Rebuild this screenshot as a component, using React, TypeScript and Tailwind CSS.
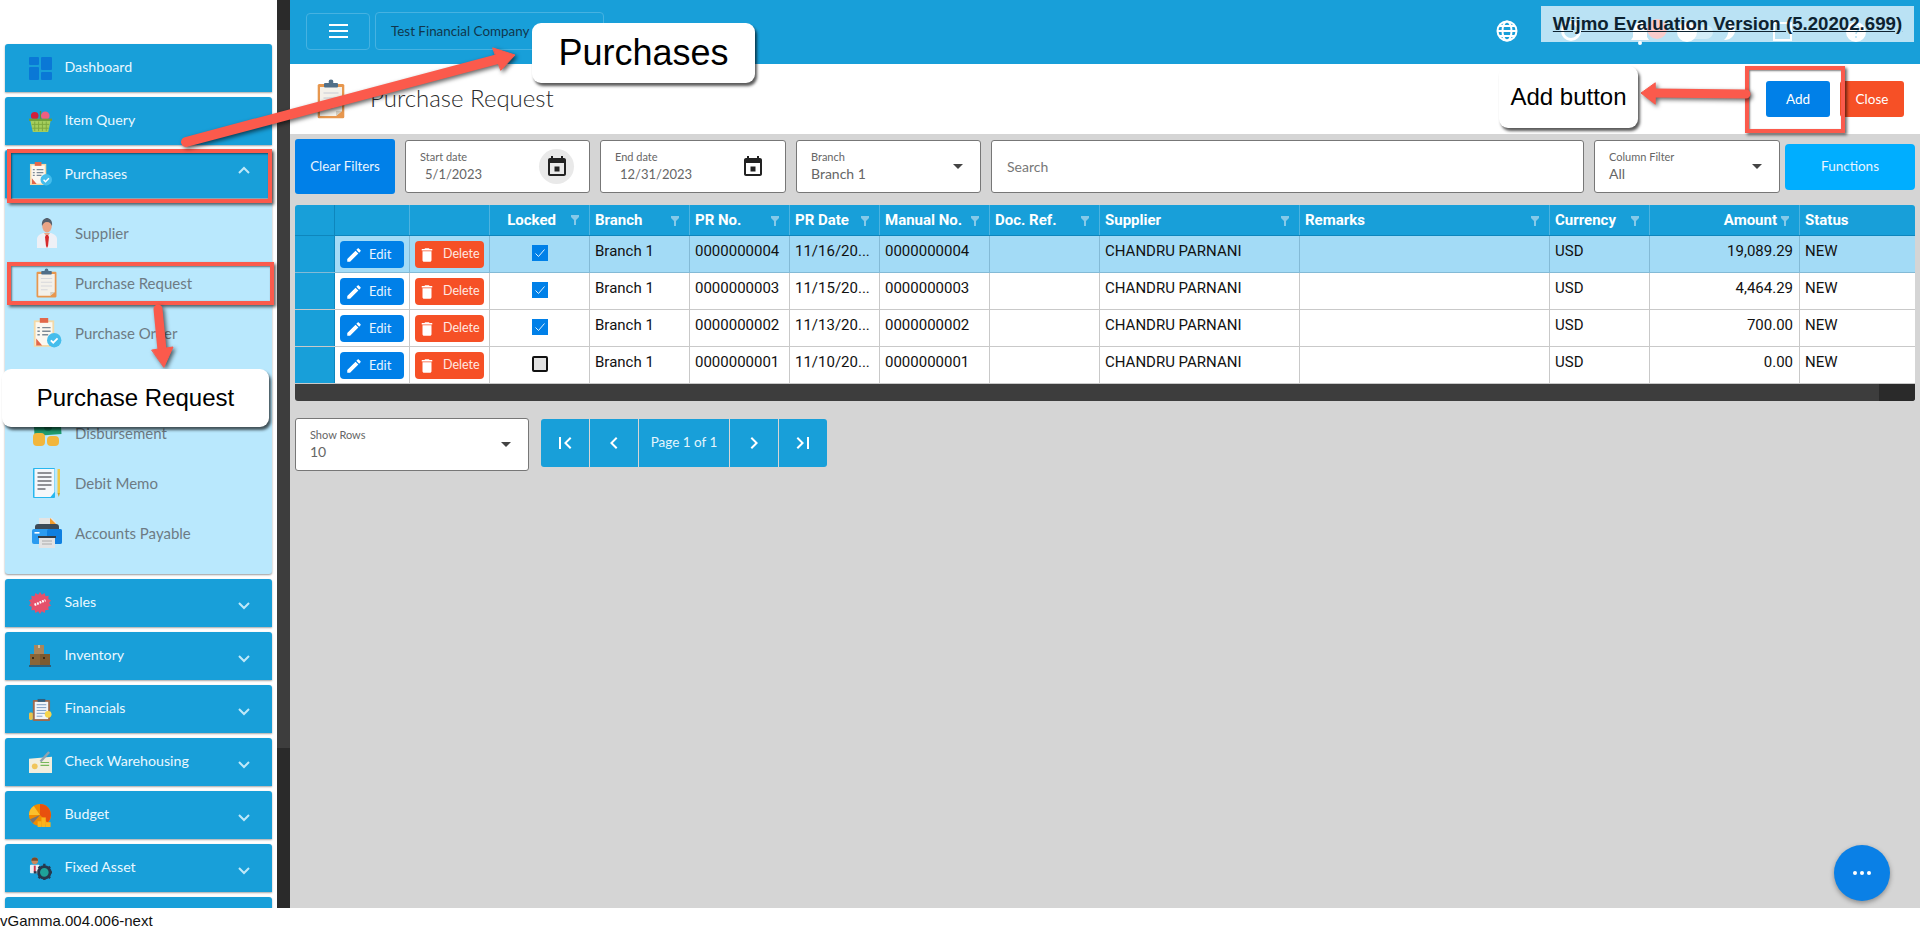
import type { ReactNode } from "react"

const BLUE = "#189fd9"

/* ---------- small material style glyphs ---------- */
function Mi({ d, className }: { d: string; className?: string }) {
  return (
    <svg viewBox="0 0 24 24" className={className} fill="currentColor">
      <path d={d} />
    </svg>
  )
}

const pen = "M3 17.25V21h3.75L17.81 9.94l-3.75-3.75L3 17.25zM20.71 7.04c.39-.39.39-1.02 0-1.41l-2.34-2.34c-.39-.39-1.02-.39-1.41 0l-1.83 1.83 3.75 3.75 1.83-1.83z"
const trash = "M6 19c0 1.1.9 2 2 2h8c1.1 0 2-.9 2-2V7H6v12zM19 4h-3.5l-1-1h-5l-1 1H5v2h14V4z"
const calendar = "M14.5 11.5h-5v5h5v-5zM16 1v2H8V1H6v2H5c-1.11 0-1.99.9-1.99 2L3 19c0 1.1.89 2 2 2h14c1.1 0 2-.9 2-2V5c0-1.1-.9-2-2-2h-1V1h-2zm3 18H5V8h14v11z"
const first = "M18.41 16.59L13.82 12l4.59-4.59L17 6l-6 6 6 6zM6 6h2v12H6z"
const prev = "M15.41 7.41L14 6l-6 6 6 6 1.41-1.41L10.83 12z"
const next = "M10 6L8.59 7.41 13.17 12l-4.58 4.59L10 18l6-6z"
const last = "M5.59 7.41L10.18 12l-4.59 4.59L7 18l6-6-6-6zM16 6h2v12h-2z"

function Chevron({ up }: { up?: boolean }) {
  return (
    <svg viewBox="0 0 12 8" className="h-[8px] w-[12px]" fill="none" stroke="#bfe8f8" strokeWidth="2">
      <path d={up ? "M1 7l5-5 5 5" : "M1 1l5 5 5-5"} />
    </svg>
  )
}

function Funnel() {
  return (
    <svg viewBox="0 0 8 10" className="h-[10px] w-[8px]" fill="#86c9e8">
      <path d="M0 0h8v2L5 5v5H3V5L0 2z" />
    </svg>
  )
}

function Caret() {
  return <span className="h-0 w-0 border-x-[5px] border-t-[5px] border-x-transparent border-t-[#444]" />
}

/* ---------- coloured menu pictures ---------- */
const DashboardPic = (
  <svg viewBox="0 0 23 23" className="h-[23px] w-[23px]" fill="#0a78d6">
    <rect width="10" height="8" rx="1" />
    <rect y="10" width="10" height="13" rx="1" />
    <rect x="12" width="11" height="13" rx="1" />
    <rect x="12" y="15" width="11" height="8" rx="1" />
  </svg>
)

const BasketPic = (
  <svg viewBox="0 0 24 24" className="h-[23px] w-[23px]">
    <path d="M12 1v9" stroke="#5b8f3a" strokeWidth="1.5" />
    <circle cx="6" cy="6" r="4" fill="#d0203a" />
    <circle cx="17" cy="6" r="4.5" fill="#ef5f80" />
    <rect y="9" width="24" height="2.5" fill="#6e9e3c" />
    <path d="M1.5 11.5h21L20 23H4z" fill="#a4cd5c" />
    <path d="M6 12v10M10 12v10M14 12v10M18 12v10M3 15h18M3.5 19h17" stroke="#7da83f" strokeWidth="1" />
  </svg>
)

function PurchaseDocPic({ size }: { size: string }) {
  return (
    <svg viewBox="0 0 24 25" className={size}>
      <rect x="1" y="2" width="17" height="22" fill="#f3d9a8" />
      <rect x="2.5" y="3.5" width="14" height="19" fill="#fbf8f1" />
      <rect x="6" y="0" width="7" height="4" fill="#e2674a" />
      <path d="M8 8h7M8 11h7M8 14h5M4 8h2M4 11h2M4 14h2" stroke="#7d8a96" strokeWidth="1.2" />
      <path d="M3 17l5 6H3z" fill="#e2674a" />
      <circle cx="18" cy="18.5" r="6" fill="#45bdec" />
      <path d="M15.2 18.6l2 2 3.6-3.6" stroke="#fff" strokeWidth="1.5" fill="none" />
    </svg>
  )
}

function ClipboardPic({ className }: { className: string }) {
  return (
    <svg viewBox="0 0 28 40" className={className}>
      <rect x="0.7" y="5" width="26.6" height="34.3" rx="1.5" fill="#e7974e" />
      <path d="M3 8h22v24l-6 5H3z" fill="#f4f1ea" />
      <path d="M19 37l6-5h-6z" fill="#d5cfc2" />
      <path d="M6.5 14h15M6.5 19h15M6.5 24h15M6.5 29h9" stroke="#d6d8db" strokeWidth="1.5" />
      <rect x="7" y="4" width="14" height="4.5" rx="1" fill="#506f88" />
      <circle cx="14" cy="3" r="2.4" fill="#506f88" />
    </svg>
  )
}

const PersonPic = (
  <svg viewBox="0 0 20 30" className="h-[30px] w-[20px]">
    <path d="M0 30v-9c0-3 3-5 6-6h8c3 1 6 3 6 6v9z" fill="#eef0f6" />
    <path d="M7 15h6l-3 4z" fill="#e9a586" />
    <path d="M9 17h2l1 2-1 9-1 2-1-2-1-9z" fill="#d62a2d" />
    <ellipse cx="10" cy="8" rx="4.8" ry="6.5" fill="#e9a586" />
    <path d="M5 8C4 2 8 0 10 0s6 2 5 8c-1-2-2-4-5-4S6 6 5 8z" fill="#55606d" />
  </svg>
)

const MoneyPic = (
  <svg viewBox="0 0 30 28" className="h-[30px] w-[30px]">
    <rect x="2" y="0" width="27" height="16" fill="#1f9b6e" transform="rotate(-4 15 8)" />
    <circle cx="16" cy="8" r="4" fill="#147a55" />
    <rect x="1" y="14" width="12" height="13" rx="4" fill="#f2b63c" />
    <rect x="15" y="17" width="12" height="10" rx="4" fill="#f2b63c" />
  </svg>
)

const MemoPic = (
  <svg viewBox="0 0 28 30" className="h-[30px] w-[28px]">
    <rect x="0" y="0" width="22" height="30" rx="1" fill="#26b7ef" />
    <path d="M1.5 1h20v23l-4 5h-16z" fill="#f5f7fa" />
    <path d="M4.5 5h14M4.5 9h14M4.5 13h14M4.5 17h14M4.5 21h8" stroke="#6d6f74" strokeWidth="1.6" />
    <rect x="24.5" y="1" width="2.5" height="24" fill="#f0c947" />
    <path d="M24.5 25h2.5l-1.2 4z" fill="#caa02e" />
  </svg>
)

const PrinterPic = (
  <svg viewBox="0 0 30 30" className="h-[30px] w-[30px]">
    <path d="M7 0h13l4 4v10H7z" fill="#e4e4e4" />
    <path d="M18 0l6 6h-6z" fill="#f39c2c" />
    <rect x="3" y="6" width="24" height="8" rx="3" fill="#3d4a57" />
    <rect x="0" y="11" width="30" height="15" rx="2" fill="#2b9bf0" />
    <rect x="15" y="11" width="15" height="15" rx="2" fill="#0f7fe0" />
    <rect x="2.5" y="14" width="5" height="1.6" fill="#fff" />
    <rect x="6" y="18" width="18" height="2" fill="#333b44" />
    <rect x="7" y="20" width="16" height="10" fill="#e3e3e3" />
    <path d="M10 23h10M10 26h10" stroke="#aaa" strokeWidth="1" />
  </svg>
)

const SalePic = (
  <svg viewBox="0 0 24 24" className="h-[22px] w-[22px]">
    <path
      d="M12 0l2 3 3-2 1 3.500 3.500-.5-.5 3.500L24 9l-2 3 2 3-3 1 .5 3.500L18 19.500 17 23l-3-2-2 3-2-3-3 2-1-3.500-3.500.5L3 16l-3-1 2-3-2-3 3-1.500L2.500 4 6 4.500 7 1l3 2z"
      fill="#e5506b"
    />
    <path d="M6 14l12-5" stroke="#fff" strokeWidth="2.600" strokeDasharray="2 1" />
  </svg>
)

const BoxesPic = (
  <svg viewBox="0 0 22 22" className="h-[22px] w-[22px]">
    <rect x="5" y="0" width="10" height="10" fill="#a9865c" />
    <rect x="1" y="9" width="10" height="11" fill="#8a6537" />
    <rect x="11" y="9" width="10" height="11" fill="#7b5a30" />
    <rect x="9" y="0" width="2" height="3" fill="#d6bd96" />
    <rect x="3" y="12" width="2" height="2" fill="#3f2d18" />
    <rect x="14" y="12" width="2" height="2" fill="#3f2d18" />
    <rect x="0" y="20" width="22" height="2" fill="#2d5f78" />
  </svg>
)

const FinancialsPic = (
  <svg viewBox="0 0 24 24" className="h-[23px] w-[23px]">
    <rect x="4" y="2" width="18" height="22" rx="1" fill="#9c6a4f" />
    <rect x="6" y="4" width="14" height="18" fill="#f1f5fa" />
    <path d="M8 7h10M8 10h10M8 13h10M8 16h10M8 19h6" stroke="#7b9cc2" strokeWidth="1" />
    <rect x="9" y="1" width="8" height="3" fill="#2f5f80" />
    <rect x="0" y="15" width="4" height="8" rx="1.500" fill="#e8c24a" />
    <circle cx="20" cy="17" r="3.500" fill="#f6d54c" />
  </svg>
)

const CheckPic = (
  <svg viewBox="0 0 24 24" className="h-[23px] w-[23px]">
    <path d="M0 8l24-2v17H0z" fill="#f1eedd" />
    <path d="M12 11L21 1" stroke="#94a3ad" strokeWidth="2.500" />
    <path d="M12 12h9M12 15h9" stroke="#77b85a" strokeWidth="1.200" />
    <circle cx="6" cy="16" r="3" fill="#f0c55a" />
  </svg>
)

const BudgetPic = (
  <svg viewBox="0 0 24 24" className="h-[23px] w-[23px]">
    <circle cx="11.500" cy="11.500" r="11.500" fill="#f08a00" />
    <path d="M11.500 0a11.500 11.500 0 0 1 8 19.500L11.500 11.500z" fill="#e8500e" />
    <path d="M0 11.500A11.500 11.500 0 0 1 5 2l6.500 9.500z" fill="#fbc02d" />
    <path d="M11.500 11.500L1 16l3 4z" fill="#7b7370" />
    <rect x="9" y="18" width="4" height="6" fill="#f9b31a" />
    <rect x="13" y="14" width="4.500" height="10" fill="#f9b31a" />
    <rect x="17.500" y="19" width="5" height="5" fill="#f9b31a" />
  </svg>
)

const AssetPic = (
  <svg viewBox="0 0 24 24" className="h-[23px] w-[23px]">
    <circle cx="6" cy="4" r="3.500" fill="#c98a5e" />
    <path d="M2.500 4a3.500 3.500 0 0 1 7 0z" fill="#7a4b2a" />
    <rect x="1" y="8" width="10" height="9" rx="1" fill="#e9edf3" />
    <rect x="5" y="9" width="2" height="7" fill="#d0364a" />
    <circle cx="16" cy="16" r="6" fill="#1ea39a" stroke="#26394d" strokeWidth="3" />
    <path d="M16 7v3M16 22v2M8 16H5M24 16h-2M10 10l2 2M22 22l-2-2M22 10l-2 2M10 22l2-2" stroke="#26394d" strokeWidth="2.500" />
  </svg>
)

/* ---------- data ---------- */
const subItems: { label: string; pic: ReactNode }[] = [
  { label: "Supplier", pic: PersonPic },
  { label: "Purchase Request", pic: <ClipboardPic className="h-[30px] w-[21px]" /> },
  { label: "Purchase Order", pic: <PurchaseDocPic size="h-[30px] w-[30px]" /> },
  { label: "", pic: null },
  { label: "Disbursement", pic: MoneyPic },
  { label: "Debit Memo", pic: MemoPic },
  { label: "Accounts Payable", pic: PrinterPic }
]

const lowerMenu: { label: string; pic: ReactNode }[] = [
  { label: "Sales", pic: SalePic },
  { label: "Inventory", pic: BoxesPic },
  { label: "Financials", pic: FinancialsPic },
  { label: "Check Warehousing", pic: CheckPic },
  { label: "Budget", pic: BudgetPic },
  { label: "Fixed Asset", pic: AssetPic }
]

const columns = "grid grid-cols-[40px_75px_80px_100px_100px_100px_90px_110px_110px_200px_250px_100px_150px_1fr]"

const headers = ["Branch", "PR No.", "PR Date", "Manual No.", "Doc. Ref.", "Supplier", "Remarks", "Currency"]

const rows = [
  { no: "0000000004", date: "11/16/20...", amount: "19,089.29", locked: true },
  { no: "0000000003", date: "11/15/20...", amount: "4,464.29", locked: true },
  { no: "0000000002", date: "11/13/20...", amount: "700.00", locked: true },
  { no: "0000000001", date: "11/10/20...", amount: "0.00", locked: false }
]

/* ---------- pieces ---------- */
function MenuRow({ label, pic, open, plain }: { label: string; pic: ReactNode; open?: boolean; plain?: boolean }) {
  return (
    <div className="flex h-[48px] shrink-0 items-center rounded-t-[3px] bg-[#189fd9] pl-[24px] pr-[22px] text-[14.200px] text-[#eaf8ff] shadow-[0_1px_2px_rgba(0,0,0,0.35)]">
      <span className="flex w-[35.500px] items-center">{pic}</span>
      <span className={`flex-1 ${open ? "" : "pb-[2px]"}`}>{label}</span>
      {!plain && (
        <span className={open ? "mb-[8px]" : "mt-[6px]"}>
          <Chevron up={open} />
        </span>
      )}
    </div>
  )
}

function Field({ label, value, width, indent, children }: { label: string; value: string; width: string; indent?: boolean; children?: ReactNode }) {
  return (
    <div className={`flex h-[53px] shrink-0 items-center justify-between rounded-[3px] border border-[#777] bg-white pl-[14px] pr-[17px] ${width}`}>
      <div className="flex flex-col">
        <span className="text-[11px] leading-[14px] text-[#666]">{label}</span>
        <span className={`pt-[1px] leading-[18px] text-[#666] ${indent ? "pl-[5px] text-[13px]" : "text-[14px]"}`}>{value}</span>
      </div>
      {children}
    </div>
  )
}

function DateField({ label, value, width, active }: { label: string; value: string; width: string; active?: boolean }) {
  return (
    <Field label={label} value={value} width={width} indent>
      <span className={`-mr-[2px] flex h-[35px] w-[35px] items-center justify-center rounded-full ${active ? "bg-[#e9e9e9]" : ""}`}>
        <Mi d={calendar} className="h-[24px] w-[24px] text-[#222]" />
      </span>
    </Field>
  )
}

function HeadCell({ label, right, last }: { label: string; right?: boolean; last?: boolean }) {
  return (
    <div className={`flex items-center justify-between gap-[4px] border-r border-[#4db3e0] pl-[5px] pr-[6px] ${last ? "border-r-0" : ""}`}>
      <span className={right ? "flex-1 text-right" : ""}>{label}</span>
      {!last && (
        <span className="mr-[4px] mt-[1px]">
          <Funnel />
        </span>
      )}
    </div>
  )
}

function Cell({ children, right, divider }: { children?: ReactNode; right?: boolean; divider: string }) {
  return <div className={`border-r pl-[5px] pr-[6px] pt-[4px] ${divider} ${right ? "text-right" : ""}`}>{children}</div>
}

function PageButton({ d }: { d: string }) {
  return (
    <span className="flex w-[48px] items-center justify-center bg-[#189fd9] text-white">
      <Mi d={d} className="h-[24px] w-[24px]" />
    </span>
  )
}

function Callout({ className, children }: { className: string; children: ReactNode }) {
  return (
    <div className={`absolute flex items-center justify-center rounded-[9px] bg-white font-['Liberation_Sans',sans-serif] text-black shadow-[2px_3px_3px_rgba(0,0,0,0.65)] ${className}`}>
      {children}
    </div>
  )
}

function TopIcons() {
  return (
    <svg viewBox="0 0 430 64" className="absolute right-0 top-0 h-[64px] w-[430px]" fill="none">
      {/* globe sits left of the watermark, the rest are veiled by it */}
      <g stroke="#fff" strokeWidth="2">
        <circle cx="17" cy="31" r="9.500" />
        <ellipse cx="17" cy="31" rx="4.500" ry="9.500" />
        <path d="M7.500 31h19M9 26h16M9 36h16" />
      </g>
      <g stroke="#fff" strokeWidth="3">
        <circle cx="81" cy="31" r="8.500" />
      </g>
      <path d="M150 22c-5 1-7 5-7 9v6l-2 3h18l-2-3v-6c0-4-2-8-7-9z" fill="#fff" />
      <circle cx="150" cy="43" r="2" fill="#fff" />
      <circle cx="167" cy="29" r="10" fill="#ef5350" />
      <rect x="197" y="25" width="26" height="14" rx="7" fill="#fff" fillOpacity="0.4" />
      <circle cx="197" cy="32" r="10" fill="#fff" />
      <path d="M237 21c6 2 8 6 8 10s-4 9-11 9c5-4 6-13 3-19z" fill="#fff" />
      <rect x="284" y="23" width="17" height="17" stroke="#fff" strokeWidth="2" />
      <circle cx="366" cy="32" r="10" fill="#fff" />
      <path d="M363 29c0-4 6-4 6 0 0 2-3 2-3 5M366 36v2" stroke={BLUE} strokeWidth="1.600" />
    </svg>
  )
}

export default function App() {
  return (
    <div className="relative flex h-[931px] w-[1920px] flex-col overflow-hidden bg-white font-['Lato',sans-serif]">
      <div className="flex h-[908px]">
        {/* side menu */}
        <aside className="flex w-[277px] flex-col gap-[5px] overflow-hidden bg-white px-[5px] pt-[44px]">
          <MenuRow label="Dashboard" pic={DashboardPic} plain />
          <MenuRow label="Item Query" pic={BasketPic} plain />
          <div className="shrink-0 rounded-b-[3px] bg-[#b9e8fd] shadow-[0_1px_2px_rgba(0,0,0,0.4)]">
            <MenuRow label="Purchases" pic={<PurchaseDocPic size="h-[24px] w-[23px]" />} open />
            <div className="pb-[16px] pt-[10px]">
              {subItems.map((s, i) => (
                <div key={i} className="flex h-[50px] items-center text-[15px] text-[#6d7b84]">
                  <span className="flex w-[70px] justify-center pl-[13px]">{s.pic}</span>
                  <span>{s.label}</span>
                </div>
              ))}
            </div>
          </div>
          {lowerMenu.map(m => (
            <MenuRow key={m.label} label={m.label} pic={m.pic} />
          ))}
          <MenuRow label="" pic={null} plain />
        </aside>

        {/* scroll bar */}
        <div className="w-[13px] shrink-0 bg-[#2a2a2a] pt-[30px]">
          <div className="h-[718px] bg-[#3d3d3d]" />
        </div>

        {/* page */}
        <main className="flex min-w-0 flex-1 flex-col bg-[#d5d5d5]">
          <header className="relative flex h-[64px] shrink-0 items-center gap-[5px] bg-[#189fd9] pl-[16px] pb-[2px]">
            <button className="flex h-[37px] w-[64px] items-center justify-center rounded-[4px] border border-[#46b2e1]">
              <span className="flex w-[19px] flex-col gap-[4px]">
                <i className="h-[2px] bg-white" />
                <i className="h-[2px] bg-white" />
                <i className="h-[2px] bg-white" />
              </span>
            </button>
            <div className="flex h-[38px] w-[229px] items-center rounded-[4px] border border-[#46b2e1] pl-[15px] text-[13.400px] text-[#10374d]">
              Test Financial Company
            </div>
            <TopIcons />
          </header>

          <div className="flex h-[70px] shrink-0 items-center justify-between bg-white pl-[27px] pr-[16px]">
            <div className="flex items-center gap-[25px]">
              <ClipboardPic className="h-[40px] w-[28px]" />
              <h1 className="pb-[2px] text-[24px] font-light text-[#2b2b2b]">Purchase Request</h1>
            </div>
            <div className="flex gap-[10px] text-[13.500px] text-white">
              <button className="h-[36px] w-[64px] rounded-[3px] bg-[#0080e8]">Add</button>
              <button className="h-[36px] w-[64px] rounded-[3px] bg-[#f65026]">Close</button>
            </div>
          </div>

          <div className="flex items-center px-[5px] pt-[5px]">
            <button className="mr-[10px] h-[55px] w-[100px] shrink-0 rounded-[3px] bg-[#0080e8] text-[13.300px] text-[#e8f4ff]">
              Clear Filters
            </button>
            <div className="flex gap-[10px]">
              <DateField label="Start date" value="5/1/2023" width="w-[185px]" active />
              <DateField label="End date" value="12/31/2023" width="w-[186px]" />
              <Field label="Branch" value="Branch 1" width="w-[185px]">
                <Caret />
              </Field>
              <div className="flex h-[53px] w-[593px] items-center rounded-[3px] border border-[#777] bg-white pl-[15px] text-[14px] text-[#777]">
                Search
              </div>
              <Field label="Column Filter" value="All" width="w-[186px]">
                <Caret />
              </Field>
            </div>
            <button className="ml-[5px] h-[46px] w-[130px] shrink-0 rounded-[4px] bg-[#00aeff] text-[13.500px] text-[#e8f4ff]">
              Functions
            </button>
          </div>

          {/* grid */}
          <div className="mx-[5px] mt-[11px] overflow-hidden rounded-[3px] font-['Roboto',sans-serif] text-[15px] text-[#111]">
            <div className={`${columns} h-[31px] border-b border-[#0e86bd] bg-[#189fd9] font-bold text-white`}>
              <div className="border-r border-[#0e86bd]" />
              <div className="border-r border-[#4db3e0]" />
              <div className="border-r border-[#4db3e0]" />
              <div className="flex items-center justify-end border-r border-[#4db3e0] pr-[10px]">
                <span className="mr-[15px]">Locked</span>
                <Funnel />
              </div>
              {headers.map(h => (
                <HeadCell key={h} label={h} />
              ))}
              <HeadCell label="Amount" right />
              <HeadCell label="Status" last />
            </div>

            {rows.map((r, i) => {
              const divider = i === 0 ? "border-[#83bad6]" : "border-[#c9c9c9]"
              return (
                <div
                  key={r.no}
                  className={`${columns} h-[37px] border-b ${divider} ${i === 0 ? "bg-[#a3dbf6]" : "bg-white"}`}
                >
                  <div className="border-r border-[#0e86bd] bg-[#189fd9]" />
                  <div className={`border-r ${divider} pl-[5px] pt-[5px]`}>
                    <button className="flex h-[27px] w-[64px] items-center rounded-[4px] bg-[#0080e8] pl-[5px] font-['Lato',sans-serif] text-[13px] text-[#e8f4ff]">
                      <Mi d={pen} className="mr-[6px] h-[18px] w-[18px] text-white" />
                      Edit
                    </button>
                  </div>
                  <div className={`border-r ${divider} pl-[5px] pt-[5px]`}>
                    <button className="flex h-[27px] w-[69px] items-center rounded-[4px] bg-[#f65026] pl-[3px] font-['Lato',sans-serif] text-[12.500px] text-[#ffe9e2]">
                      <Mi d={trash} className="mr-[7px] h-[18px] w-[18px] text-white" />
                      Delete
                    </button>
                  </div>
                  <div className={`flex justify-center border-r ${divider} pt-[9px]`}>
                    {r.locked ? (
                      <span className="flex h-[16px] w-[16px] items-center justify-center bg-[#0080e8]">
                        <svg viewBox="0 0 16 16" className="h-[16px] w-[16px]" fill="none" stroke="#dff1ff" strokeWidth="1">
                          <path d="M3.500 8.500l3 3 6-7" />
                        </svg>
                      </span>
                    ) : (
                      <span className="h-[16px] w-[16px] rounded-[2px] border-2 border-[#111] bg-[#e2e2e2]" />
                    )}
                  </div>
                  <Cell divider={divider}>Branch 1</Cell>
                  <Cell divider={divider}>{r.no}</Cell>
                  <Cell divider={divider}>{r.date}</Cell>
                  <Cell divider={divider}>{r.no}</Cell>
                  <Cell divider={divider} />
                  <Cell divider={divider}>CHANDRU PARNANI</Cell>
                  <Cell divider={divider} />
                  <Cell divider={divider}>USD</Cell>
                  <Cell divider={divider} right>
                    {r.amount}
                  </Cell>
                  <div className="pl-[5px] pt-[4px]">NEW</div>
                </div>
              )
            })}

            <div className="flex h-[17px] bg-[#3d3d3d]">
              <div className="flex-1" />
              <div className="w-[36px] bg-[#2a2a2a]" />
            </div>
          </div>

          {/* paging */}
          <div className="flex items-start pl-[5px] pt-[17px]">
            <Field label="Show Rows" value="10" width="w-[234px]">
              <Caret />
            </Field>
            <div className="ml-[12px] mt-[1px] flex h-[48px] gap-px overflow-hidden rounded-[3px] bg-[#d5d5d5]">
              <PageButton d={first} />
              <PageButton d={prev} />
              <span className="flex w-[90px] items-center justify-center bg-[#189fd9] pb-[2px] text-[13.500px] text-[#e3f5fd]">
                Page 1 of 1
              </span>
              <PageButton d={next} />
              <PageButton d={last} />
            </div>
          </div>
        </main>
      </div>

      <footer className="h-[23px] bg-white font-['Liberation_Sans',sans-serif] text-[15px] leading-[26px] text-[#111]">
        vGamma.004.006-next
      </footer>

      {/* floating action button */}
      <button className="absolute left-[1834px] top-[845px] flex h-[56px] w-[56px] items-center justify-center gap-[3px] rounded-full bg-[#0a80e6] shadow-[0_2px_5px_rgba(0,0,0,0.35)]">
        <i className="h-[4px] w-[4px] rounded-full bg-white" />
        <i className="h-[4px] w-[4px] rounded-full bg-white" />
        <i className="h-[4px] w-[4px] rounded-full bg-white" />
      </button>

      {/* evaluation watermark */}
      <div className="absolute left-[1541px] top-[6px] flex h-[36px] w-[373px] items-center justify-center bg-white/70 font-['Liberation_Sans',sans-serif] text-[18.667px] font-bold text-[#0d2230] underline">
        Wijmo Evaluation Version (5.20202.699)
      </div>

      {/* tutorial markup drawn over the page */}
      <div className="absolute left-[7px] top-[149px] h-[54px] w-[265px] border-[4px] border-[#fb5a4c] shadow-[2px_2px_3px_rgba(0,0,0,0.6),inset_1px_1px_2px_rgba(0,0,0,0.5)]" />
      <div className="absolute left-[7px] top-[262px] h-[43px] w-[267px] border-[4px] border-[#fb5a4c] shadow-[2px_2px_3px_rgba(0,0,0,0.6),inset_1px_1px_2px_rgba(0,0,0,0.5)]" />
      <div className="absolute left-[1745px] top-[66px] h-[67px] w-[100px] border-[4px] border-[#fb5a4c] shadow-[2px_2px_3px_rgba(0,0,0,0.6),inset_1px_1px_2px_rgba(0,0,0,0.5)]" />

      <svg viewBox="0 0 1920 931" className="pointer-events-none absolute left-0 top-0 h-[931px] w-[1920px] drop-shadow-[2px_2px_2px_rgba(0,0,0,0.6)]">
        <g fill="#fb5a4c" stroke="#fb5a4c" strokeLinecap="round" strokeLinejoin="round">
          <path d="M186 142L498 59" strokeWidth="10" />
          <path d="M493 48L515 55L501 70z" strokeWidth="1" />
          <path d="M158 309L162 350" strokeWidth="9" />
          <path d="M152 350L173 347L164 367z" strokeWidth="1" />
          <path d="M1746 94L1654 93" strokeWidth="9" />
          <path d="M1655 83L1641 93L1655 104z" strokeWidth="1" />
        </g>
      </svg>

      <Callout className="left-[532px] top-[23px] h-[60px] w-[223px] text-[36px]">Purchases</Callout>
      <Callout className="left-[2px] top-[369px] h-[58px] w-[267px] text-[24px]">Purchase Request</Callout>
      <Callout className="left-[1499px] top-[66px] h-[62px] w-[139px] text-[24px]">Add button</Callout>
    </div>
  )
}
